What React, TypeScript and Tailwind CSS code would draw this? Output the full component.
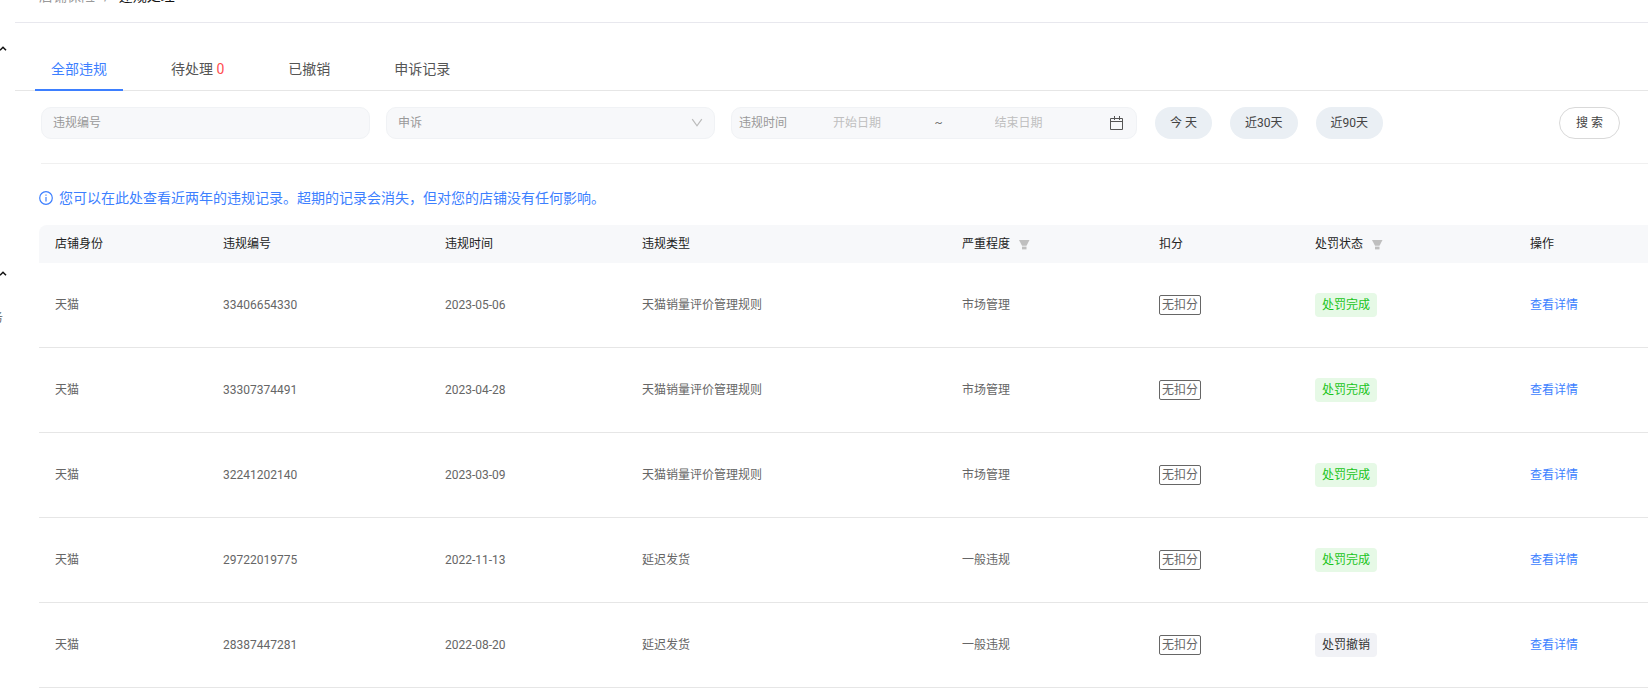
import React from "react";
import { clsx } from "clsx";

const tabs = [
  { name: "全部违规" },
  { name: "待处理", count: 0 },
  { name: "已撤销" },
  { name: "申诉记录" },
];

const ranges = ["今 天", "近30天", "近90天"];

const columns = [
  { title: "店铺身份", width: "w-[168px]" },
  { title: "违规编号", width: "w-[222px]" },
  { title: "违规时间", width: "w-[197px]" },
  { title: "违规类型", width: "w-[320px]" },
  { title: "严重程度", width: "w-[197px]", filter: true },
  { title: "扣分", width: "w-[156px]" },
  { title: "处罚状态", width: "w-[215px]", filter: true },
  { title: "操作", width: "w-[134px]" },
];

const records = [
  { id: "33406654330", date: "2023-05-06", type: "天猫销量评价管理规则", level: "市场管理", status: "处罚完成" },
  { id: "33307374491", date: "2023-04-28", type: "天猫销量评价管理规则", level: "市场管理", status: "处罚完成" },
  { id: "32241202140", date: "2023-03-09", type: "天猫销量评价管理规则", level: "市场管理", status: "处罚完成" },
  { id: "29722019775", date: "2022-11-13", type: "延迟发货", level: "一般违规", status: "处罚完成" },
  { id: "28387447281", date: "2022-08-20", type: "延迟发货", level: "一般违规", status: "处罚撤销" },
];

const FilterIcon = () => (
  <svg width="12" height="12" viewBox="0 0 12 12" fill="#bfbfbf">
    <path d="M1 2h10.5L8.5 7.8H4z" />
    <path d="M4 8.6h4.5V11.4H4z" />
  </svg>
);

const CaretUp = () => (
  <svg width="7" height="5" viewBox="0 0 7 5" fill="none" stroke="#111" strokeWidth="1.5">
    <path d="M0 4.2 3 1.2l3 3" />
  </svg>
);

const Sidebar = () => (
  <aside className="w-[15px] shrink-0 overflow-hidden pt-[46px]">
    <CaretUp />
    <div className="pt-[220px]">
      <CaretUp />
    </div>
    <div className="flex w-[3px] justify-end overflow-hidden pt-[34px] text-xs text-[#666]">
      <span>务</span>
    </div>
  </aside>
);

const Breadcrumb = () => (
  <nav className="flex h-[23px] items-start overflow-hidden border-b border-[#e8e8ee] pl-6 text-sm leading-[22px]">
    <div className="-mt-[15px] flex whitespace-pre">
      <a href="#" className="text-[#999]">店铺保险</a>
      <span className="px-[9px] text-[#999]">/</span>
      <span className="text-[#111]">违规处理</span>
    </div>
  </nav>
);

const Tabs = () => (
  <div role="tablist" className="flex h-[68px] items-end gap-8 border-b border-[#e6e6e6] pl-5">
    {tabs.map((tab, index) => (
      <button
        key={tab.name}
        role="tab"
        aria-selected={index === 0}
        className={clsx(
          "-mb-px border-b-2 px-4 pb-[9px] text-sm leading-[22px]",
          index === 0 ? "border-[#3d7fff] text-[#3d7fff]" : "border-transparent text-[#555]"
        )}
      >
        {tab.name}
        {tab.count !== undefined && <span className="text-[#ff4d4f]"> {tab.count}</span>}
      </button>
    ))}
  </div>
);

const Filters = () => (
  <form className="ml-[26px] flex items-center border-b border-[#f0f0f0] pt-4 pr-7 pb-6 text-xs">
    <div className="grid flex-1 grid-cols-[329fr_329fr_406fr] gap-4">
      <input
        aria-label="违规编号"
        placeholder="违规编号"
        className="h-8 min-w-0 rounded-[10px] border border-[#f0f2f5] bg-[#f7f8fa] px-[11px] placeholder:text-[#999]"
      />
      <div className="relative min-w-0">
        <select
          aria-label="申诉"
          className="h-8 w-full appearance-none rounded-[10px] border border-[#f0f2f5] bg-[#f7f8fa] px-[11px] text-[#999]"
        >
          <option>申诉</option>
        </select>
        <svg
          className="pointer-events-none absolute top-[11px] right-3"
          width="12"
          height="10"
          viewBox="0 0 12 10"
          fill="none"
          stroke="#bbb"
          strokeWidth="1.2"
        >
          <path d="M1.2 1.2 6 7.8l4.8-6.6" />
        </svg>
      </div>
      <div className="flex h-8 min-w-0 items-center rounded-[10px] border border-[#f0f2f5] bg-[#f7f8fa] pr-3 pl-[7px] text-[#999]">
        <label htmlFor="start" className="w-[94px] shrink-0">违规时间</label>
        <input id="start" placeholder="开始日期" className="w-0 flex-[102] placeholder:text-[#bfbfbf]" />
        <span className="w-[60px] shrink-0 text-[#777]">~</span>
        <input aria-label="结束日期" placeholder="结束日期" className="w-0 flex-[116] placeholder:text-[#bfbfbf]" />
        <svg width="14" height="14" viewBox="0 0 14 14" fill="none" stroke="#555">
          <path d="M.5 2.5h12v11H.5zM.5 5.5h12M4.5 0v4M9.5 0v4" />
        </svg>
      </div>
    </div>
    <div className="mr-44 ml-[18px] flex gap-[18px]">
      {ranges.map((range) => (
        <button key={range} type="button" className="h-8 rounded-full bg-[#eaeff4] px-[15px] text-[#444]">
          {range}
        </button>
      ))}
    </div>
    <button type="button" className="h-8 rounded-full border border-[#d9d9d9] px-4 text-[#444]">
      搜 索
    </button>
  </form>
);

const Notice = () => (
  <p className="flex items-center gap-[6px] pt-[23px] pb-4 pl-6 text-sm leading-[22px] text-[#3d7fff]">
    <svg width="14" height="14" viewBox="0 0 14 14" fill="none" stroke="currentColor" strokeWidth="1.2">
      <circle cx="7" cy="7" r="6.3" />
      <path d="M7 6v4.4M7 3.5v1.2" />
    </svg>
    您可以在此处查看近两年的违规记录。超期的记录会消失，但对您的店铺没有任何影响。
  </p>
);

const cell = "border-b border-[#e6e6e6] px-4";

const RecordTable = () => (
  <div className="pl-6">
    <table className="w-full table-fixed border-separate border-spacing-0 text-left text-xs text-[#666]">
      <thead>
        <tr className="h-[38px] text-[#222]">
          {columns.map((column) => (
            <th key={column.title} className={clsx("bg-[#f7f8fa] px-4 font-normal first:rounded-tl-lg", column.width)}>
              <span className="flex items-center gap-2">
                {column.title}
                {column.filter && (
                  <button aria-label="筛选">
                    <FilterIcon />
                  </button>
                )}
              </span>
            </th>
          ))}
        </tr>
      </thead>
      <tbody>
        {records.map((record) => (
          <tr key={record.id} className="h-[85px]">
            <td className={cell}>天猫</td>
            <td className={cell}>{record.id}</td>
            <td className={cell}>{record.date}</td>
            <td className={cell}>{record.type}</td>
            <td className={cell}>{record.level}</td>
            <td className={cell}>
              <span className="inline-block rounded-xs border border-[#666] px-[2px] leading-[18px]">无扣分</span>
            </td>
            <td className={cell}>
              <span
                className={clsx(
                  "inline-block rounded-sm px-[7px] leading-6",
                  record.status === "处罚完成" ? "bg-[#e6f9e6] text-[#1ac41a]" : "bg-[#f1f2f6] text-[#333]"
                )}
              >
                {record.status}
              </span>
            </td>
            <td className={cell}>
              <a href="#" className="text-[#3d7fff]">查看详情</a>
            </td>
          </tr>
        ))}
      </tbody>
    </table>
  </div>
);

const App = () => {
  return (
    <div className="flex min-h-screen bg-white font-[Roboto,'Noto_Sans_CJK_SC',sans-serif]">
      <Sidebar />
      <main className="min-w-0 flex-1">
        <Breadcrumb />
        <Tabs />
        <Filters />
        <Notice />
        <RecordTable />
      </main>
    </div>
  );
};

export default App;
